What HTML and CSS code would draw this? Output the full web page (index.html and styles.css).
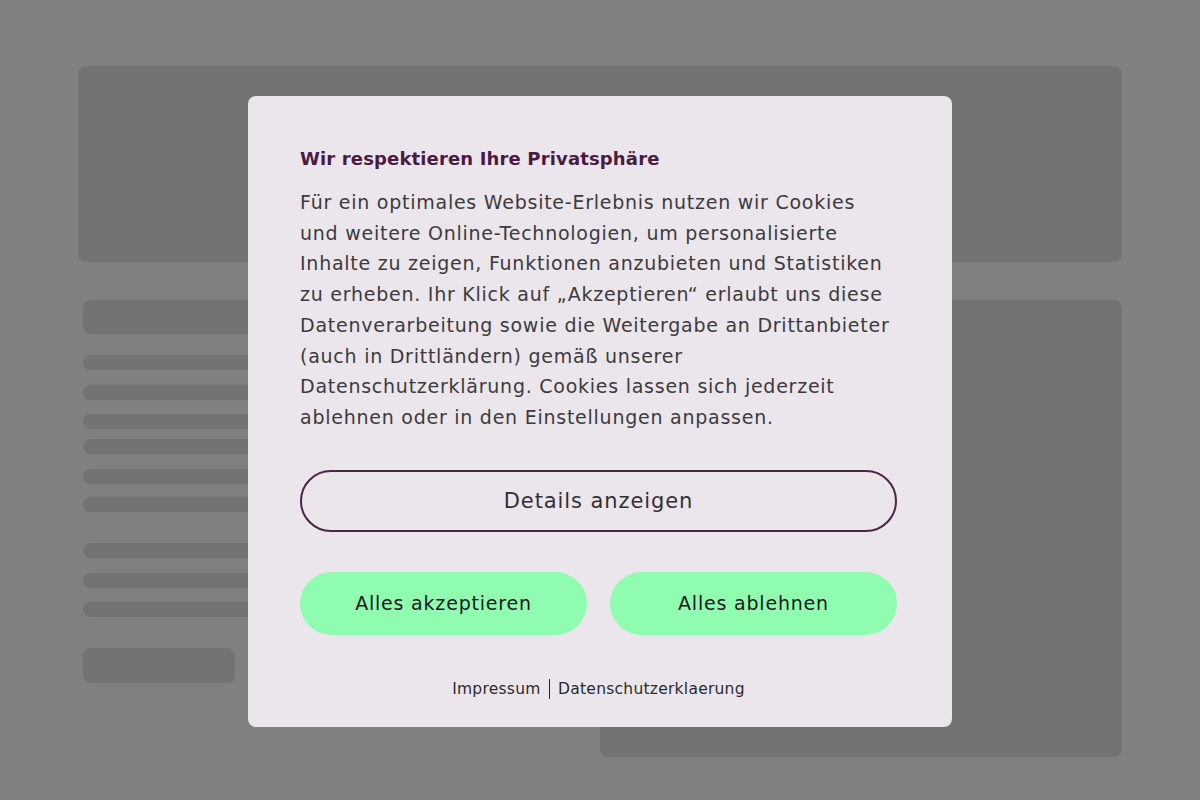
FILE: index.html
```html
<!DOCTYPE html>
<html lang="de">
<head>
<meta charset="utf-8">
<title>Cookie-Einstellungen</title>
<link rel="stylesheet" href="styles.css">
</head>
<body>
<div class="page">
  <div class="hero"></div>
  <div class="columns">
    <div class="left">
      <div class="heading-bar"></div>
      <div class="lines">
        <div class="line"></div>
        <div class="line"></div>
        <div class="line"></div>
        <div class="line"></div>
        <div class="line"></div>
        <div class="line"></div>
      </div>
      <div class="lines">
        <div class="line"></div>
        <div class="line"></div>
        <div class="line"></div>
      </div>
      <div class="btn-bar"></div>
    </div>
    <div class="right"></div>
  </div>
</div>

<div class="overlay">
  <div class="modal" role="dialog" aria-labelledby="cookie-title">
    <h2 id="cookie-title" class="modal-title">Wir respektieren Ihre Privatsphäre</h2>
    <p class="modal-text">Für ein optimales Website-Erlebnis nutzen wir Cookies<br>und weitere Online-Technologien, um personalisierte<br>Inhalte zu zeigen, Funktionen anzubieten und Statistiken<br>zu erheben. Ihr Klick auf „Akzeptieren“ erlaubt uns diese<br>Datenverarbeitung sowie die Weitergabe an Drittanbieter<br>(auch in Drittländern) gemäß unserer<br>Datenschutzerklärung. Cookies lassen sich jederzeit<br>ablehnen oder in den Einstellungen anpassen.</p>
    <button class="btn btn-outline" type="button">Details anzeigen</button>
    <div class="btn-row">
      <button class="btn btn-green" type="button">Alles akzeptieren</button>
      <button class="btn btn-green" type="button">Alles ablehnen</button>
    </div>
    <div class="links">
      <a href="#" class="link">Impressum</a>
      <span class="sep"></span>
      <a href="#" class="link">Datenschutzerklaerung</a>
    </div>
  </div>
</div>
</body>
</html>
```

FILE: styles.css
```css
* { box-sizing: border-box; }
html, body { margin: 0; padding: 0; }
body {
  width: 1200px;
  height: 800px;
  overflow: hidden;
  background: #808080;
  font-family: "DejaVu Sans", "Open Sans", sans-serif;
}
.page {
  padding: 66px 78px 0 78px;
}
.hero {
  height: 196px;
  background: #737373;
  border-radius: 8px;
}
.columns {
  display: flex;
  margin-top: 38px;
}
.left {
  width: 522px;
  padding-left: 5px;
  padding-right: 60px;
}
.heading-bar {
  height: 34px;
  background: #737373;
  border-radius: 8px;
}
.lines {
  display: flex;
  flex-direction: column;
  margin-top: 21px;
}
.lines + .lines { margin-top: 31px; }
.line {
  height: 15px;
  background: #737373;
  border-radius: 8px;
}
.line + .line { margin-top: 15px; }
.line:nth-child(3) { margin-top: 14px; }
.line:nth-child(4) { margin-top: 10px; }
.line:nth-child(6) { margin-top: 13px; }
.lines + .lines .line:nth-child(3) { margin-top: 14px; }
.btn-bar {
  margin-top: 31px;
  width: 152px;
  height: 35px;
  background: #737373;
  border-radius: 8px;
}
.right {
  flex: 1;
  height: 457px;
  background: #737373;
  border-radius: 8px;
}

.overlay {
  position: absolute;
  inset: 0;
  display: flex;
  justify-content: center;
  align-items: flex-start;
  padding-top: 96px;
}
.modal {
  width: 704px;
  height: 631px;
  background: #ebe6eb;
  border-radius: 8px;
  padding: 51px 55px 0 52px;
  display: flex;
  flex-direction: column;
}
.modal-title {
  margin: 0;
  font-size: 18px;
  font-weight: 700;
  line-height: 24px;
  letter-spacing: 0.15px;
  color: #4b1a41;
}
.modal-text {
  margin: 16px 0 0 0;
  font-size: 19px;
  line-height: 30.7px;
  letter-spacing: 0.75px;
  color: #3d3a3d;
  white-space: nowrap;
}
.btn {
  font-family: inherit;
  border-radius: 999px;
  cursor: pointer;
  display: flex;
  align-items: center;
  justify-content: center;
}
.btn-outline {
  margin-top: 37px;
  height: 62px;
  width: 100%;
  background: transparent;
  border: 2px solid #4f2446;
  font-size: 21px;
  letter-spacing: 0.9px;
  color: #333033;
}
.btn-row {
  display: flex;
  gap: 23px;
  margin-top: 40px;
}
.btn-green {
  flex: 1;
  height: 63px;
  background: #8ffcb0;
  border: none;
  font-size: 19px;
  letter-spacing: 0.8px;
  color: #1a1a1a;
}
.links {
  margin-top: 44px;
  display: flex;
  justify-content: center;
  align-items: center;
  gap: 8px;
  font-size: 15.5px;
  letter-spacing: 0.25px;
}
.link {
  color: #2b2b2b;
  text-decoration: none;
}
.sep {
  width: 1.5px;
  height: 20px;
  background: #2b2b2b;
}
```
